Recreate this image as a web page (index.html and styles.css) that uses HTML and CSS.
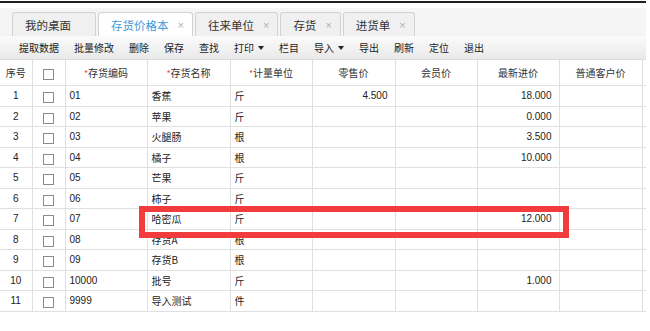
FILE: index.html
```html
<!DOCTYPE html>
<html lang="zh-CN">
<head>
    <meta charset="UTF-8">
    <title>存货价格本</title>
    <link rel="stylesheet" href="styles.css">
</head>
<body>
    <div class="page">
        <div class="top-line"></div>
        <div class="tab-bar">
            <div class="tab first">我的桌面</div>
            <div class="tab active">存货价格本<span class="close">×</span></div>
            <div class="tab">往来单位<span class="close">×</span></div>
            <div class="tab">存货<span class="close">×</span></div>
            <div class="tab">进货单<span class="close">×</span></div>
        </div>
        <div class="toolbar">
            <span class="tool">提取数据</span>
            <span class="tool">批量修改</span>
            <span class="tool">删除</span>
            <span class="tool">保存</span>
            <span class="tool">查找</span>
            <span class="tool">打印<i class="caret"></i></span>
            <span class="tool">栏目</span>
            <span class="tool">导入<i class="caret"></i></span>
            <span class="tool">导出</span>
            <span class="tool">刷新</span>
            <span class="tool">定位</span>
            <span class="tool">退出</span>
        </div>
        <div class="grid-wrap">
            <table class="grid">
                <colgroup>
                    <col class="c-no">
                    <col class="c-chk">
                    <col class="c-82">
                    <col class="c-83">
                    <col class="c-82">
                    <col class="c-83">
                    <col class="c-82">
                    <col class="c-82">
                    <col class="c-83">
                    <col class="c-rest">
                </colgroup>
                <thead>
                    <tr>
                        <th>序号</th>
                        <th><span class="chk"></span></th>
                        <th><span class="req">*</span>存货编码</th>
                        <th><span class="req">*</span>存货名称</th>
                        <th><span class="req">*</span>计量单位</th>
                        <th>零售价</th>
                        <th>会员价</th>
                        <th>最新进价</th>
                        <th>普通客户价</th>
                        <th></th>
                    </tr>
                </thead>
                <tbody>
                    <tr><td class="no">1</td><td class="cb"><span class="chk"></span></td><td class="num-txt">01</td><td>香蕉</td><td>斤</td><td class="num">4.500</td><td></td><td class="num">18.000</td><td></td><td></td></tr>
                    <tr><td class="no">2</td><td class="cb"><span class="chk"></span></td><td class="num-txt">02</td><td>苹果</td><td>斤</td><td></td><td></td><td class="num">0.000</td><td></td><td></td></tr>
                    <tr><td class="no">3</td><td class="cb"><span class="chk"></span></td><td class="num-txt">03</td><td>火腿肠</td><td>根</td><td></td><td></td><td class="num">3.500</td><td></td><td></td></tr>
                    <tr><td class="no">4</td><td class="cb"><span class="chk"></span></td><td class="num-txt">04</td><td>橘子</td><td>根</td><td></td><td></td><td class="num">10.000</td><td></td><td></td></tr>
                    <tr><td class="no">5</td><td class="cb"><span class="chk"></span></td><td class="num-txt">05</td><td>芒果</td><td>斤</td><td></td><td></td><td></td><td></td><td></td></tr>
                    <tr><td class="no">6</td><td class="cb"><span class="chk"></span></td><td class="num-txt">06</td><td>柿子</td><td>斤</td><td></td><td></td><td></td><td></td><td></td></tr>
                    <tr><td class="no">7</td><td class="cb"><span class="chk"></span></td><td class="num-txt">07</td><td>哈密瓜</td><td>斤</td><td></td><td></td><td class="num">12.000</td><td></td><td></td></tr>
                    <tr><td class="no">8</td><td class="cb"><span class="chk"></span></td><td class="num-txt">08</td><td>存货A</td><td>根</td><td></td><td></td><td></td><td></td><td></td></tr>
                    <tr><td class="no">9</td><td class="cb"><span class="chk"></span></td><td class="num-txt">09</td><td>存货B</td><td>根</td><td></td><td></td><td></td><td></td><td></td></tr>
                    <tr><td class="no">10</td><td class="cb"><span class="chk"></span></td><td class="num-txt">10000</td><td>批号</td><td>斤</td><td></td><td></td><td class="num">1.000</td><td></td><td></td></tr>
                    <tr><td class="no">11</td><td class="cb"><span class="chk"></span></td><td class="num-txt">9999</td><td>导入测试</td><td>件</td><td></td><td></td><td></td><td></td><td></td></tr>
                </tbody>
            </table>
            <div class="mark"></div>
        </div>
    </div>
</body>
</html>
```

FILE: styles.css
```css
body {
    margin: 0;
    background-color: #ffffff;
    font-family: "Liberation Sans", "Noto Sans CJK SC", sans-serif;
    color: #222222;
}
.page {
    width: 646px;
}
.top-line {
    margin-top: 1px;
    height: 2px;
    background-color: #1e1e1e;
}
.tab-bar {
    display: flex;
    align-items: flex-end;
    gap: 2px;
    margin-top: 5px;
    height: 28px;
    padding-left: 12px;
    background-color: #f5f5f5;
    box-sizing: border-box;
}
.tab {
    display: flex;
    align-items: center;
    height: 24px;
    padding: 0 8px 0 12px;
    border: 1px solid #d2d2d2;
    border-bottom: none;
    border-radius: 3px 3px 0 0;
    background-color: #f0f0f0;
    font-family: "Noto Sans CJK SC", sans-serif;
    font-size: 11.5px;
    color: #333333;
    box-sizing: border-box;
}
.tab.first {
    padding-right: 24px;
}
.tab.active {
    background-color: #ffffff;
    color: #3d9ad8;
}
.close {
    margin-left: 9px;
    font-family: "Liberation Sans", sans-serif;
    font-size: 11px;
    color: #b0b0b0;
}
.toolbar {
    display: flex;
    align-items: center;
    gap: 15px;
    height: 24px;
    padding-left: 19px;
    background: linear-gradient(#fbfbfb, #e9e9e9);
    border-bottom: 1px solid #dcdcdc;
    font-family: "Noto Sans CJK SC", sans-serif;
    font-size: 10px;
    color: #222222;
    box-sizing: border-box;
}
.tool {
    display: flex;
    align-items: center;
}
.caret {
    display: inline-block;
    margin-left: 4px;
    border-left: 3px solid transparent;
    border-right: 3px solid transparent;
    border-top: 4px solid #222222;
}
.grid-wrap {
    position: relative;
}
.grid {
    width: 646px;
    table-layout: fixed;
    border-collapse: collapse;
    font-size: 10px;
}
.c-no { width: 32px; }
.c-chk { width: 33px; }
.c-82 { width: 82px; }
.c-83 { width: 83px; }
.c-rest { width: 4px; }
.grid th,
.grid td {
    padding: 0 4px;
    border-right: 1px solid #e0e0e0;
    border-bottom: 1px solid #e0e0e0;
    white-space: nowrap;
    overflow: hidden;
    font-family: "Noto Sans CJK SC", sans-serif;
}
.grid th {
    height: 25px;
    font-weight: normal;
    color: #333333;
    text-align: center;
}
.grid td {
    height: 19.5px;
}
.grid th:last-child,
.grid td:last-child {
    padding: 0;
    border-right: none;
}
.grid td.no {
    text-align: center;
    font-family: "Liberation Sans", sans-serif;
}
.grid td.num-txt {
    font-family: "Liberation Sans", sans-serif;
}
.grid td.num {
    padding-right: 7px;
    text-align: right;
    font-family: "Liberation Sans", sans-serif;
}
.grid td.cb {
    text-align: center;
}
.req {
    color: #f04848;
    font-size: 9px;
}
.chk {
    display: inline-block;
    width: 11px;
    height: 11px;
    border: 1px solid #8a8a8a;
    background-color: #ffffff;
    box-sizing: border-box;
    vertical-align: middle;
}
.mark {
    position: absolute;
    left: 139px;
    top: 146px;
    width: 430px;
    height: 32px;
    border: 6px solid #f23b3d;
    box-sizing: border-box;
}
```
